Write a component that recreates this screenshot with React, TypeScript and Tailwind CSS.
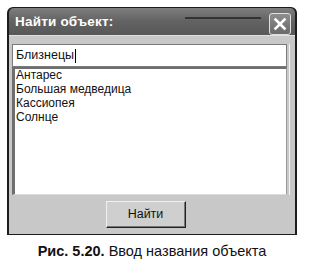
export default function App() {
  const items = ["Антарес", "Большая медведица", "Кассиопея", "Солнце"];
  return (
    <div className="w-[304px] h-[268px] bg-white relative overflow-hidden" style={{ fontFamily: '"Liberation Sans", Arial, sans-serif' }}>
      <div className="pt-[7px] pl-[7px]">
        <div className="w-[290px] h-[228px] flex flex-col bg-[#1c1c1c] rounded-t-[6px] p-[2px] pt-[1px]">
          {/* Title bar */}
          <div className="relative h-[27px] shrink-0 rounded-t-[5px] bg-gradient-to-b from-[#7e7e7e] via-[#626262] to-[#585858] flex items-center pl-[6px] pr-[4px]">
            <div className="absolute left-[176px] right-[34px] top-[9px] h-[2px] bg-[#333]" />
            <span className="text-white font-bold text-[13.5px] leading-none tracking-[0.2px] relative">Найти объект:</span>
            <div className="ml-auto relative w-[22px] h-[22px] rounded-[3px] border border-[#e0e0e0] bg-gradient-to-b from-[#8e8e8e] to-[#6a6a6a] flex items-center justify-center mt-[4px]">
              <svg width="14" height="14" viewBox="0 0 14 14">
                <path d="M2.5 2.5 L11.5 11.5 M11.5 2.5 L2.5 11.5" stroke="white" strokeWidth="2.6" strokeLinecap="square" />
              </svg>
            </div>
          </div>
          {/* Body */}
          <div className="flex-1 bg-[#c8c8c8] border-t border-[#e0e0e0] flex flex-col pl-[3px] pr-[5px] pt-[8px] pb-[6px]">
            <div className="border-r border-[#f4f4f4] pr-[2px] flex flex-col">
              <div className="h-[23px] bg-white border border-[#7a7a7a] flex items-center pl-[3px]">
                <span className="text-[12.5px] text-[#111] leading-none">Близнецы</span>
                <span className="inline-block w-[1px] h-[14px] bg-black ml-[1px]" />
              </div>
              <div className="h-[128px] bg-white border-l-[3px] border-t-[2px] border-[#6e6e6e] border-b border-b-[#dcdcdc] border-r border-r-[#9a9a9a] pl-[1px] overflow-hidden">
                <div className="mt-[-1px]">
                  {items.map((t) => (
                    <div key={t} className="text-[12px] leading-[14px] text-[#111]">{t}</div>
                  ))}
                </div>
              </div>
            </div>
            <div className="flex justify-center mt-[6px] pr-[11px]">
              <div className="w-[80px] h-[27px] bg-[#cfcfcf] border border-[#222] border-t-[#f0f0f0] border-l-[#f0f0f0] shadow-[inset_-1px_-1px_0_#777] flex items-center justify-center">
                <span className="text-[12.5px] text-[#111] leading-none">Найти</span>
              </div>
            </div>
          </div>
        </div>
      </div>
      <div className="mt-[8px] text-center text-[14.5px] text-[#111] leading-[17px]">
        <span className="font-bold">Рис. 5.20.</span> Ввод названия объекта
      </div>
    </div>
  );
}
